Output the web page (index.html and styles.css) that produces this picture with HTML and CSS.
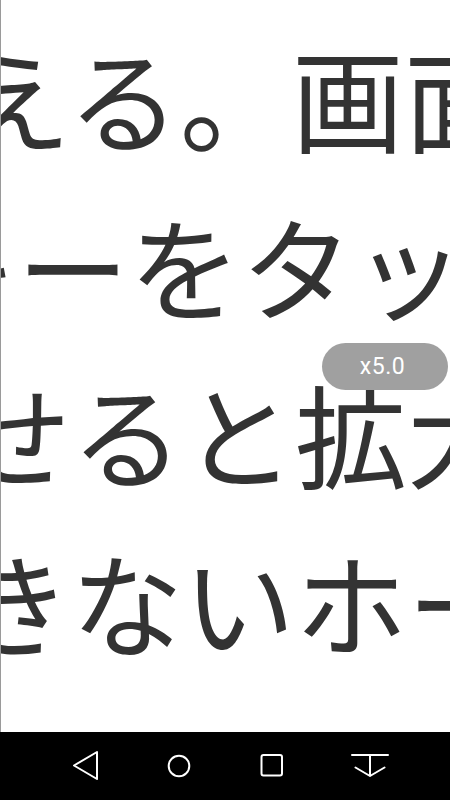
FILE: index.html
```html
<!DOCTYPE html>
<html lang="ja">
<head>
<meta charset="utf-8">
<title>Magnifier</title>
<link rel="stylesheet" href="styles.css">
</head>
<body>
<div class="screen">
  <div class="viewport">
    <div class="text">
      <div class="line line-a">える。画面</div>
      <div class="line line-b">キーをタップ</div>
      <div class="line line-a">せると拡大</div>
      <div class="line line-a">きないホーム</div>
    </div>
    <div class="zoom-pill">x5.0</div>
  </div>
  <nav class="navbar">
    <svg class="nav-icon" width="30" height="34" viewBox="0 0 30 34">
      <path d="M26 3 L3 16.5 L26 30 Z" fill="none" stroke="#fff" stroke-width="2" stroke-linejoin="round"/>
    </svg>
    <svg class="nav-icon" width="30" height="34" viewBox="0 0 30 34">
      <circle cx="15" cy="17" r="10.3" fill="none" stroke="#fff" stroke-width="2"/>
    </svg>
    <svg class="nav-icon" width="30" height="34" viewBox="0 0 30 34">
      <rect x="4.5" y="6" width="20.5" height="20.5" rx="2" fill="none" stroke="#fff" stroke-width="2"/>
    </svg>
    <svg class="nav-icon" width="40" height="34" viewBox="0 0 40 34">
      <path d="M2 6 H38 M20 6 V27 M5.5 18.5 L20 27 L34.5 18.5" fill="none" stroke="#fff" stroke-width="2" stroke-linejoin="round" stroke-linecap="round"/>
    </svg>
  </nav>
</div>
</body>
</html>
```

FILE: styles.css
```css
html, body {
  margin: 0;
  padding: 0;
  background: #ffffff;
}

.screen {
  width: 450px;
  height: 800px;
  display: flex;
  flex-direction: column;
  overflow: hidden;
}

.viewport {
  position: relative;
  height: 732px;
  flex: none;
  overflow: hidden;
  background: #ffffff;
  border-left: 1px solid #9a9a9a;
  box-sizing: border-box;
}

.text {
  padding-top: 12px;
  color: #333333;
  font-family: "Noto Sans CJK JP", "Noto Sans CJK SC", sans-serif;
  font-size: 112px;
  line-height: 168px;
}

.line {
  white-space: nowrap;
}

.line-a {
  margin-left: -42px;
}

.line-b {
  margin-left: -96px;
}

.zoom-pill {
  position: absolute;
  top: 343px;
  right: 2px;
  width: 126px;
  height: 47px;
  box-sizing: border-box;
  padding-right: 5px;
  border-radius: 24px;
  background: #a0a0a0;
  color: #ffffff;
  font-family: Roboto, "Noto Sans", sans-serif;
  font-size: 23px;
  letter-spacing: 0.5px;
  line-height: 47px;
  text-align: center;
}

.navbar {
  flex: none;
  height: 68px;
  background: #000000;
  display: flex;
  align-items: center;
  padding-left: 71px;
  gap: 63px;
}

.nav-icon {
  display: block;
}
```
